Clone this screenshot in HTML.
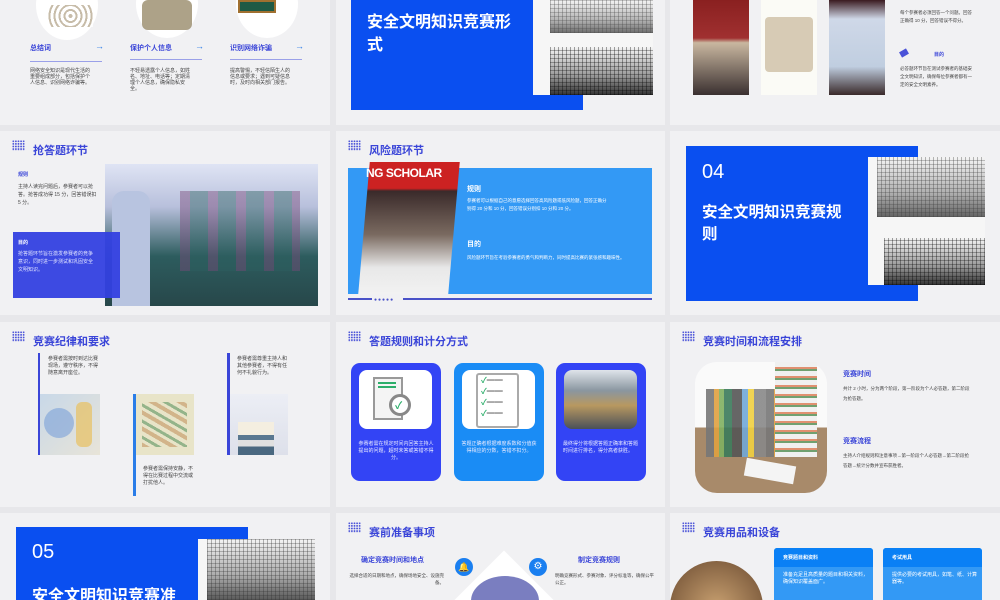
<!DOCTYPE html>
<html><head><meta charset="utf-8"><style>
*{margin:0;padding:0;box-sizing:border-box}
html,body{width:1000px;height:600px;overflow:hidden}
body{background:#e7e7ea;position:relative;font-family:"Liberation Sans","Noto Sans CJK SC",sans-serif}
.s{position:absolute;background:#f1f1f3;overflow:hidden}
.a{position:absolute}
.h{position:absolute;font-size:11px;font-weight:bold;color:#3a45d8;white-space:nowrap}
.dots{position:absolute;width:13px;height:11px;background-image:radial-gradient(circle,#4a52d8 0.8px,transparent 1px);background-size:2.6px 2.6px}
.t{position:absolute;font-size:5px;line-height:7px;color:#444}
.w{color:#fff}
.grid{background-image:repeating-linear-gradient(90deg,rgba(0,0,0,.35) 0 1px,transparent 1px 4px),repeating-linear-gradient(0deg,rgba(0,0,0,.3) 0 1px,transparent 1px 4px),linear-gradient(180deg,#f4f4f4,#999 60%,#333)}
</style></head><body>

<!-- Row 1 -->
<div class="s" style="left:0;top:0;width:330px;height:125px">
 <div class="a" style="left:36px;top:-30px;width:62px;height:70px;border-radius:50%;background:#fff"></div>
 <div class="a" style="left:48px;top:5px;width:45px;height:22px;background:repeating-radial-gradient(circle,#b9ab93 0 2px,#fff 2px 5px);opacity:.8"></div>
 <div class="a" style="left:136px;top:-30px;width:62px;height:68px;border-radius:50%;background:#fff"></div>
 <div class="a" style="left:142px;top:0;width:50px;height:30px;background:#8a7a55;border-radius:6px;opacity:.7"></div>
 <div class="a" style="left:236px;top:-30px;width:62px;height:68px;border-radius:50%;background:#fff"></div>
 <div class="a" style="left:238px;top:0;width:38px;height:13px;background:#1f5a45;border:2px solid #a07030"></div>
 <div class="h" style="left:30px;top:43px;font-size:7px">总结词</div>
 <div class="h" style="left:130px;top:43px;font-size:7px">保护个人信息</div>
 <div class="h" style="left:230px;top:43px;font-size:7px">识别网络诈骗</div>
 <div class="a" style="left:95px;top:41px;color:#2b7de8;font-size:9px">→</div>
 <div class="a" style="left:195px;top:41px;color:#2b7de8;font-size:9px">→</div>
 <div class="a" style="left:295px;top:41px;color:#2b7de8;font-size:9px">→</div>
 <div class="a" style="left:30px;top:61px;width:72px;height:1px;background:#9aa0e8"></div>
 <div class="a" style="left:130px;top:59px;width:72px;height:1px;background:#9aa0e8"></div>
 <div class="a" style="left:230px;top:59px;width:72px;height:1px;background:#9aa0e8"></div>
 <div class="t" style="left:30px;top:68px;width:60px;line-height:6px">网络安全知识是现代生活的重要组成部分，包括保护个人信息、识别网络诈骗等。</div>
 <div class="t" style="left:130px;top:68px;width:60px;line-height:6px">不轻易透露个人信息，如姓名、地址、电话等；定期清理个人信息，确保隐私安全。</div>
 <div class="t" style="left:230px;top:68px;width:60px;line-height:6px">提高警惕，不轻信陌生人的信息或要求；遇到可疑信息时，及时向相关部门报告。</div>
</div>

<div class="s" style="left:336px;top:0;width:329px;height:125px">
 <div class="a" style="left:15px;top:0;width:232px;height:110px;background:#0a4ff0"></div>
 <div class="a w" style="left:31px;top:11px;width:150px;font-size:16px;font-weight:bold;line-height:23px">安全文明知识竞赛形式</div>
 <div class="a" style="left:197px;top:0;width:120px;height:95px;background:#f6f6f6"></div>
 <div class="a grid" style="left:214px;top:0;width:103px;height:33px;opacity:.7"></div>
 <div class="a grid" style="left:214px;top:47px;width:103px;height:48px"></div>
</div>

<div class="s" style="left:670px;top:0;width:330px;height:125px">
 <div class="a" style="left:23px;top:0;width:56px;height:95px;background:linear-gradient(180deg,#8a2020 0%,#a03030 40%,#c9b7a0 45%,#3a3030 100%)"></div>
 <div class="a" style="left:91px;top:0;width:56px;height:95px;background:#fbfbf6"></div>
 <div class="a" style="left:95px;top:17px;width:48px;height:55px;background:#c8b69a;opacity:.7;border-radius:4px"></div>
 <div class="a" style="left:159px;top:0;width:56px;height:95px;background:linear-gradient(180deg,#3a1a20,#cfd8e8 20%,#c0cee0 70%,#3a2a2a)"></div>
 <div class="t" style="left:230px;top:9px;width:72px;line-height:8px;font-size:4.5px">每个参赛者必须回答一个问题。回答正确得 10 分，回答错误不得分。</div>
 <div class="a" style="left:230px;top:50px;width:8px;height:6px;background:#4a52d8;transform:rotate(-30deg)"></div>
 <div class="a" style="left:264px;top:51px;font-size:5px;color:#3a45d8;font-weight:bold">目的</div>
 <div class="t" style="left:230px;top:65px;width:72px;line-height:8px;font-size:4.5px">必答题环节旨在测试参赛者的基础安全文明知识，确保每位参赛者都有一定的安全文明素养。</div>
</div>

<!-- Row 2 -->
<div class="s" style="left:0;top:131px;width:330px;height:184px">
 <div class="dots" style="left:12px;top:9px"></div>
 <div class="h" style="left:33px;top:11px">抢答题环节</div>
 <div class="a" style="left:18px;top:40px;font-size:5px;color:#3a45d8;font-weight:bold">规则</div>
 <div class="t" style="left:18px;top:52px;width:80px;line-height:8px">主持人读完问题后，参赛者可以抢答。抢答成功得 15 分，回答错误扣 5 分。</div>
 <div class="a" style="left:105px;top:33px;width:213px;height:142px;background:linear-gradient(180deg,#dfe4f4 0%,#b8c0dc 30%,#2d5c5e 65%,#27474a 100%)"></div>
 <div class="a" style="left:180px;top:60px;width:120px;height:80px;background:repeating-linear-gradient(90deg,#7a4a7a 0 10px,#2d6060 10px 28px);opacity:.45"></div>
 <div class="a" style="left:112px;top:60px;width:38px;height:115px;background:#b8c4e0;border-radius:12px 12px 0 0"></div>
 <div class="a" style="left:13px;top:101px;width:107px;height:66px;background:#3340e0;opacity:.95"></div>
 <div class="a w" style="left:18px;top:108px;font-size:5px;font-weight:bold">目的</div>
 <div class="t w" style="left:18px;top:119px;width:78px;line-height:8px;color:#dfe2ff">抢答题环节旨在激发参赛者的竞争意识，同时进一步测试和巩固安全文明知识。</div>
</div>

<div class="s" style="left:336px;top:131px;width:329px;height:184px">
 <div class="dots" style="left:12px;top:9px"></div>
 <div class="h" style="left:33px;top:11px">风险题环节</div>
 <div class="a" style="left:12px;top:37px;width:304px;height:126px;background:#3399f5"></div>
 <div class="a" style="left:28px;top:31px;width:90px;height:132px;background:linear-gradient(180deg,#cc2222 0%,#cc2222 20%,#3a2a2a 22%,#7a6a60 55%,#e8e8e8 80%,#f2f2f2 100%);transform:skewX(-5deg)"></div>
 <div class="a w" style="left:30px;top:35px;font-size:12px;font-weight:bold;letter-spacing:-.5px">NG SCHOLAR</div>
 <div class="a w" style="left:131px;top:53px;font-size:7px;font-weight:bold">规则</div>
 <div class="t w" style="left:131px;top:66px;width:140px;line-height:8px;font-size:4.5px">参赛者可以根据自己的意愿选择回答高风险题或低风险题，回答正确分别得 20 分和 10 分，回答错误分别扣 10 分和 20 分。</div>
 <div class="a w" style="left:131px;top:108px;font-size:7px;font-weight:bold">目的</div>
 <div class="t w" style="left:131px;top:123px;width:170px;font-size:4.5px">风险题环节旨在考验参赛者的勇气和判断力，同时提高比赛的紧张感和趣味性。</div>
 <div class="a" style="left:12px;top:167px;width:24px;height:2px;background:#4a52c8"></div>
 <div class="a" style="left:67px;top:167px;width:249px;height:2px;background:#4a52c8"></div>
 <div class="a" style="left:38px;top:166px;font-size:5px;color:#4a52c8;letter-spacing:1px">●●●●●</div>
</div>

<div class="s" style="left:670px;top:131px;width:330px;height:184px">
 <div class="a" style="left:16px;top:15px;width:232px;height:155px;background:#0a4ff0"></div>
 <div class="a w" style="left:32px;top:30px;font-size:20px">04</div>
 <div class="a w" style="left:32px;top:71px;width:145px;font-size:15.5px;font-weight:bold;line-height:22px">安全文明知识竞赛规则</div>
 <div class="a" style="left:198px;top:26px;width:117px;height:128px;background:#f6f6f6"></div>
 <div class="a grid" style="left:207px;top:26px;width:108px;height:60px;opacity:.75"></div>
 <div class="a grid" style="left:214px;top:107px;width:101px;height:47px"></div>
</div>

<!-- Row 3 -->
<div class="s" style="left:0;top:322px;width:330px;height:185px">
 <div class="dots" style="left:12px;top:9px"></div>
 <div class="h" style="left:33px;top:11px">竞赛纪律和要求</div>
 <div class="a" style="left:38px;top:31px;width:2px;height:102px;background:#3a45d8"></div>
 <div class="t" style="left:48px;top:34px;width:50px">参赛者需按时到达比赛现场，遵守秩序，不得随意离开座位。</div>
 <div class="a" style="left:40px;top:72px;width:60px;height:61px;background:linear-gradient(135deg,#c8d8e8,#e8e4d8);"></div>
 <div class="a" style="left:44px;top:86px;width:30px;height:30px;border-radius:50%;background:#7aa0d8;opacity:.6"></div>
 <div class="a" style="left:76px;top:80px;width:16px;height:45px;background:#e8c060;opacity:.7;border-radius:6px"></div>
 <div class="a" style="left:133px;top:72px;width:3px;height:102px;background:#2a7de8"></div>
 <div class="a" style="left:136px;top:72px;width:58px;height:61px;background:#e8e4c8"></div>
 <div class="a" style="left:142px;top:80px;width:45px;height:45px;background:repeating-linear-gradient(30deg,#c8a070 0 4px,#e8e4c8 4px 7px,#70a070 7px 10px,#e8e4c8 10px 14px);opacity:.7"></div>
 <div class="t" style="left:143px;top:144px;width:50px">参赛者需保持安静，不得在比赛过程中交流或打扰他人。</div>
 <div class="a" style="left:227px;top:31px;width:3px;height:102px;background:#3a45d8"></div>
 <div class="t" style="left:237px;top:34px;width:50px">参赛者需尊重主持人和其他参赛者，不得有任何不礼貌行为。</div>
 <div class="a" style="left:230px;top:72px;width:58px;height:61px;background:linear-gradient(180deg,#eceef5,#dde0ea)"></div>
 <div class="a" style="left:238px;top:100px;width:36px;height:33px;background:linear-gradient(180deg,#f4eee0 0 40%,#5a7890 40% 55%,#e0e0e0 55% 75%,#4a6880 75%)"></div>
</div>

<div class="s" style="left:336px;top:322px;width:329px;height:185px">
 <div class="dots" style="left:12px;top:9px"></div>
 <div class="h" style="left:33px;top:11px">答题规则和计分方式</div>
 <div class="a" style="left:15px;top:41px;width:90px;height:118px;background:#3344f5;border-radius:9px"></div>
 <div class="a" style="left:23px;top:48px;width:73px;height:59px;background:#fff;border-radius:8px"></div>
 <div class="a" style="left:37px;top:55px;width:30px;height:43px;border:2px solid #999;background:#f4f4f4"></div>
 <div class="a" style="left:42px;top:60px;width:18px;height:2px;background:#2cae6a;box-shadow:0 4px 0 #2cae6a"></div>
 <div class="a" style="left:53px;top:72px;width:22px;height:22px;border:3px solid #888;border-radius:50%;background:#fff"></div>
 <div class="a" style="left:59px;top:75px;font-size:10px;color:#2cae6a;font-weight:bold">✓</div>
 <div class="t w" style="left:22px;top:119px;width:76px;text-align:center;color:#e8eaff">参赛者需在规定时间内回答主持人提出的问题，超时未答或答错不得分。</div>
 <div class="a" style="left:118px;top:41px;width:90px;height:118px;background:#1a8cf5;border-radius:9px"></div>
 <div class="a" style="left:126px;top:48px;width:73px;height:59px;background:#fff;border-radius:8px"></div>
 <div class="a" style="left:140px;top:51px;width:43px;height:55px;border:2px solid #aaa;border-radius:3px"></div>
 <div class="a" style="left:145px;top:53px;font-size:8px;line-height:11px;color:#2cae6a;font-weight:bold">✓<span style="color:#555">━━</span><br>✓<span style="color:#555">━━</span><br>✓<span style="color:#555">━━</span><br>✓<span style="color:#555">━━</span></div>
 <div class="t w" style="left:125px;top:119px;width:76px;text-align:center;color:#e8eaff">答题正确者根据难度系数和分值获得相应的分数，答错不扣分。</div>
 <div class="a" style="left:220px;top:41px;width:90px;height:118px;background:#3344f5;border-radius:9px"></div>
 <div class="a" style="left:228px;top:48px;width:73px;height:59px;border-radius:8px;background:linear-gradient(180deg,#dfe4ea 0%,#8a96a0 35%,#b89860 60%,#4a5058 100%)"></div>
 <div class="t w" style="left:227px;top:119px;width:78px;color:#e8eaff">最终得分将根据答题正确率和答题时间进行排名，得分高者获胜。</div>
</div>

<div class="s" style="left:670px;top:322px;width:330px;height:185px">
 <div class="dots" style="left:12px;top:9px"></div>
 <div class="h" style="left:33px;top:11px">竞赛时间和流程安排</div>
 <div class="a" style="left:25px;top:40px;width:132px;height:131px;border-radius:22px;background:linear-gradient(180deg,#fafafa 0 50%,#a88a6a 50%)"></div>
 <div class="a" style="left:36px;top:67px;width:110px;height:68px;background:repeating-linear-gradient(90deg,#777 0 8px,#e0a040 8px 13px,#80b060 13px 18px,#3a7a5a 18px 26px,#555 26px 36px,#70a8d8 36px 42px,#f0d040 42px 48px,#888 48px 60px);opacity:.9"></div>
 <div class="a" style="left:105px;top:40px;width:42px;height:95px;background:repeating-linear-gradient(0deg,#f0f0f0 0 5px,#70a070 5px 7px,#e09070 7px 9px)"></div>
 <div class="a" style="left:75px;top:140px;width:50px;height:18px;background:#f4f4f4;transform:rotate(10deg)"></div>
 <div class="a" style="left:173px;top:47px;font-size:7px;font-weight:bold;color:#3a45d8">竞赛时间</div>
 <div class="t" style="left:173px;top:62px;width:130px;line-height:10px;font-size:4.5px">共计 2 小时，分为两个阶段，第一阶段为个人必答题，第二阶段为抢答题。</div>
 <div class="a" style="left:173px;top:114px;font-size:7px;font-weight:bold;color:#3a45d8">竞赛流程</div>
 <div class="t" style="left:173px;top:129px;width:130px;line-height:10px;font-size:4.5px">主持人介绍规则和注意事项→第一阶段个人必答题→第二阶段抢答题→统计分数并宣布获胜者。</div>
</div>

<!-- Row 4 -->
<div class="s" style="left:0;top:513px;width:330px;height:87px">
 <div class="a" style="left:16px;top:14px;width:232px;height:73px;background:#0a4ff0"></div>
 <div class="a w" style="left:32px;top:28px;font-size:20px">05</div>
 <div class="a w" style="left:32px;top:69px;font-size:16px;font-weight:bold;white-space:nowrap">安全文明知识竞赛准</div>
 <div class="a" style="left:198px;top:26px;width:117px;height:61px;background:#f6f6f6"></div>
 <div class="a grid" style="left:207px;top:26px;width:108px;height:61px;opacity:.8"></div>
</div>

<div class="s" style="left:336px;top:513px;width:329px;height:87px">
 <div class="dots" style="left:12px;top:9px"></div>
 <div class="h" style="left:33px;top:11px">赛前准备事项</div>
 <div class="a" style="left:25px;top:42px;font-size:7px;font-weight:bold;color:#3a45d8">确定竞赛时间和地点</div>
 <div class="t" style="left:8px;top:59px;width:100px;text-align:right;font-size:4.5px">选择合适的日期和地点，确保场地安全、设施完备。</div>
 <div class="a" style="left:119px;top:45px;width:18px;height:18px;border-radius:50%;background:#1a7ff0;color:#fff;font-size:9px;text-align:center;line-height:18px">🔔</div>
 <div class="a" style="left:193px;top:45px;width:18px;height:18px;border-radius:50%;background:#1a7ff0;color:#fff;font-size:10px;text-align:center;line-height:18px">⚙</div>
 <div class="a" style="left:133px;top:52px;width:70px;height:70px;background:#fff;transform:rotate(45deg)"></div>
 <div class="a" style="left:135px;top:63px;width:68px;height:50px;border-radius:50%;background:#7a7ec0"></div>
 <div class="a" style="left:242px;top:42px;font-size:7px;font-weight:bold;color:#3a45d8">制定竞赛规则</div>
 <div class="t" style="left:219px;top:59px;width:100px;font-size:4.5px">明确竞赛形式、参赛对象、评分标准等，确保公平公正。</div>
</div>

<div class="s" style="left:670px;top:513px;width:330px;height:87px">
 <div class="dots" style="left:12px;top:9px"></div>
 <div class="h" style="left:33px;top:11px">竞赛用品和设备</div>
 <div class="a" style="left:0;top:48px;width:93px;height:93px;border-radius:50%;background:radial-gradient(circle,#c8a070,#6a4a30)"></div>
 <div class="a" style="left:104px;top:35px;width:99px;height:52px;background:#3399f5;border-radius:3px 3px 0 0"></div>
 <div class="a" style="left:104px;top:35px;width:99px;height:19px;background:#0a80f5;border-radius:3px 3px 0 0"></div>
 <div class="a w" style="left:113px;top:41px;font-size:5px;font-weight:bold">竞赛题目和资料</div>
 <div class="t w" style="left:113px;top:59px;width:85px">准备充足且高质量的题目和相关资料，确保知识覆盖面广。</div>
 <div class="a" style="left:213px;top:35px;width:99px;height:52px;background:#3399f5;border-radius:3px 3px 0 0"></div>
 <div class="a" style="left:213px;top:35px;width:99px;height:19px;background:#0a80f5;border-radius:3px 3px 0 0"></div>
 <div class="a w" style="left:222px;top:41px;font-size:5px;font-weight:bold">考试用具</div>
 <div class="t w" style="left:222px;top:59px;width:85px">提供必要的考试用具，如笔、纸、计算器等。</div>
</div>
</body></html>
